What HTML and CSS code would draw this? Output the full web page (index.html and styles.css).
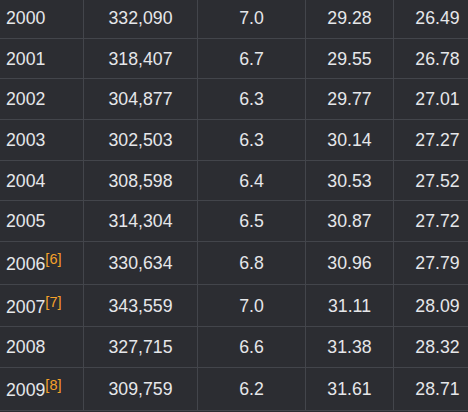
FILE: index.html
```html
<!DOCTYPE html>
<html>
<head>
<meta charset="utf-8">
<link rel="stylesheet" href="styles.css">
</head>
<body>
<table class="data">
  <colgroup>
    <col class="c1"><col class="c2"><col class="c3"><col class="c4"><col class="c5">
  </colgroup>
  <tbody>
    <tr><td>2000</td><td>332,090</td><td>7.0</td><td>29.28</td><td>26.49</td></tr>
    <tr><td>2001</td><td>318,407</td><td>6.7</td><td>29.55</td><td>26.78</td></tr>
    <tr><td>2002</td><td>304,877</td><td>6.3</td><td>29.77</td><td>27.01</td></tr>
    <tr><td>2003</td><td>302,503</td><td>6.3</td><td>30.14</td><td>27.27</td></tr>
    <tr><td>2004</td><td>308,598</td><td>6.4</td><td>30.53</td><td>27.52</td></tr>
    <tr><td>2005</td><td>314,304</td><td>6.5</td><td>30.87</td><td>27.72</td></tr>
    <tr><td>2006<sup class="ref">[6]</sup></td><td>330,634</td><td>6.8</td><td>30.96</td><td>27.79</td></tr>
    <tr><td>2007<sup class="ref">[7]</sup></td><td>343,559</td><td>7.0</td><td>31.11</td><td>28.09</td></tr>
    <tr><td>2008</td><td>327,715</td><td>6.6</td><td>31.38</td><td>28.32</td></tr>
    <tr><td>2009<sup class="ref">[8]</sup></td><td>309,759</td><td>6.2</td><td>31.61</td><td>28.71</td></tr>
  </tbody>
</table>
</body>
</html>
```

FILE: styles.css
```css
html, body {
  margin: 0;
  padding: 0;
  background: #2c2d32;
  overflow: hidden;
}

.data {
  margin-top: -2px;
  border-collapse: separate;
  border-spacing: 0;
  table-layout: fixed;
  width: 482px;
  font-family: "Liberation Sans", Arial, sans-serif;
  font-size: 17.7px;
  color: #e6e7ea;
}

.c1 { width: 84px; }
.c2 { width: 114px; }
.c3 { width: 108px; }
.c4 { width: 88px; }
.c5 { width: 88px; }

.data td {
  padding: 10px 6px 9.67px;
  line-height: 20px;
  text-align: center;
  border-right: 1px solid #43454b;
  border-bottom: 1px solid #43454b;
  white-space: nowrap;
}

.data td:first-child {
  text-align: left;
}

.ref {
  font-size: 14.5px;
  line-height: 1;
  vertical-align: 6px;
  color: #f5a02a;
}
```
